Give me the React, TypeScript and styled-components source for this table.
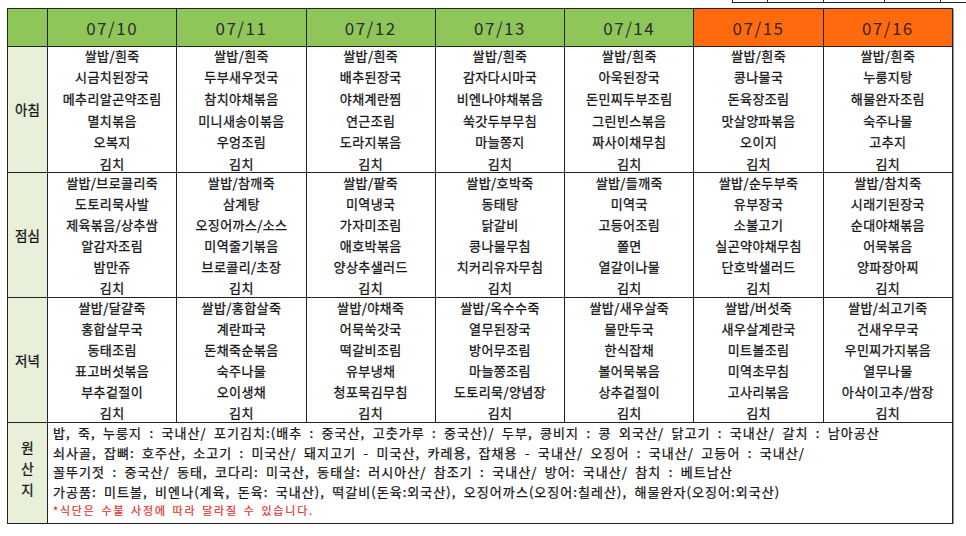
import styled, { createGlobalStyle } from "styled-components";

const colors = {
  line: "#222222",
  green: "#8fc65a",
  orange: "#ff6a0e",
  label: "#e9f0da",
  text: "#161616",
  red: "#e2322c",
};

const GlobalStyle = createGlobalStyle`
  body {
    margin: 0;
    background: #ffffff;
    font-family: "Noto Sans CJK KR", "Noto Sans", sans-serif;
    color: ${colors.text};
  }
`;

type Day = {
  date: string;
  weekend?: boolean;
  breakfast: string[];
  lunch: string[];
  dinner: string[];
};

const days: Day[] = [
  {
    date: "07/10",
    breakfast: ["쌀밥/흰죽", "시금치된장국", "메추리알곤약조림", "멸치볶음", "오복지", "김치"],
    lunch: ["쌀밥/브로콜리죽", "도토리묵사발", "제육볶음/상추쌈", "알감자조림", "밤만쥬", "김치"],
    dinner: ["쌀밥/달걀죽", "홍합살무국", "동태조림", "표고버섯볶음", "부추겉절이", "김치"],
  },
  {
    date: "07/11",
    breakfast: ["쌀밥/흰죽", "두부새우젓국", "참치야채볶음", "미니새송이볶음", "우엉조림", "김치"],
    lunch: ["쌀밥/참깨죽", "삼계탕", "오징어까스/소스", "미역줄기볶음", "브로콜리/초장", "김치"],
    dinner: ["쌀밥/홍합살죽", "계란파국", "돈채죽순볶음", "숙주나물", "오이생채", "김치"],
  },
  {
    date: "07/12",
    breakfast: ["쌀밥/흰죽", "배추된장국", "야채계란찜", "연근조림", "도라지볶음", "김치"],
    lunch: ["쌀밥/팥죽", "미역냉국", "가자미조림", "애호박볶음", "양상추샐러드", "김치"],
    dinner: ["쌀밥/야채죽", "어묵쑥갓국", "떡갈비조림", "유부냉채", "청포묵김무침", "김치"],
  },
  {
    date: "07/13",
    breakfast: ["쌀밥/흰죽", "감자다시마국", "비엔나야채볶음", "쑥갓두부무침", "마늘쫑지", "김치"],
    lunch: ["쌀밥/호박죽", "동태탕", "닭갈비", "콩나물무침", "치커리유자무침", "김치"],
    dinner: ["쌀밥/옥수수죽", "열무된장국", "방어무조림", "마늘쫑조림", "도토리묵/양념장", "김치"],
  },
  {
    date: "07/14",
    breakfast: ["쌀밥/흰죽", "아욱된장국", "돈민찌두부조림", "그린빈스볶음", "짜사이채무침", "김치"],
    lunch: ["쌀밥/들깨죽", "미역국", "고등어조림", "쫄면", "열갈이나물", "김치"],
    dinner: ["쌀밥/새우살죽", "물만두국", "한식잡채", "볼어묵볶음", "상추겉절이", "김치"],
  },
  {
    date: "07/15",
    weekend: true,
    breakfast: ["쌀밥/흰죽", "콩나물국", "돈육장조림", "맛살양파볶음", "오이지", "김치"],
    lunch: ["쌀밥/순두부죽", "유부장국", "소불고기", "실곤약야채무침", "단호박샐러드", "김치"],
    dinner: ["쌀밥/버섯죽", "새우살계란국", "미트볼조림", "미역초무침", "고사리볶음", "김치"],
  },
  {
    date: "07/16",
    weekend: true,
    breakfast: ["쌀밥/흰죽", "누룽지탕", "해물완자조림", "숙주나물", "고추지", "김치"],
    lunch: ["쌀밥/참치죽", "시래기된장국", "순대야채볶음", "어묵볶음", "양파장아찌", "김치"],
    dinner: ["쌀밥/쇠고기죽", "건새우무국", "우민찌가지볶음", "열무나물", "아삭이고추/쌈장", "김치"],
  },
];

const meals: { key: "breakfast" | "lunch" | "dinner"; label: string; lh: number }[] = [
  { key: "breakfast", label: "아침", lh: 21.6 },
  { key: "lunch", label: "점심", lh: 21 },
  { key: "dinner", label: "저녁", lh: 21 },
];

const origin = [
  "밥, 죽, 누룽지 : 국내산/ 포기김치:(배추 : 중국산, 고춧가루 : 중국산)/ 두부, 콩비지 : 콩 외국산/ 닭고기 : 국내산/ 갈치 : 남아공산",
  "쇠사골, 잡뼈: 호주산, 소고기 : 미국산/ 돼지고기 - 미국산, 카레용, 잡채용 - 국내산/ 오징어 : 국내산/ 고등어 : 국내산/",
  "꼴뚜기젓 : 중국산/ 동태, 코다리: 미국산, 동태살: 러시아산/ 참조기 : 국내산/ 방어: 국내산/ 참치 : 베트남산",
  "가공품: 미트볼, 비엔나(계육, 돈육: 국내산), 떡갈비(돈육:외국산), 오징어까스(오징어:칠레산), 해물완자(오징어:외국산)",
];

// 위쪽에 잘려 보이는 다른 표의 아랫부분
const TopStrip = styled.div`
  display: flex;
  margin-left: 732px;
  height: 3px;
  box-sizing: border-box;
  border-bottom: 1px solid ${colors.line};
`;

const StripCell = styled.div<{ $w: number }>`
  width: ${(p) => p.$w}px;
  box-sizing: border-box;
  border-left: 1px solid ${colors.line};
  &:last-child {
    border-right: 1px solid ${colors.line};
  }
`;

const Table = styled.div`
  display: grid;
  grid-template-columns: 39px repeat(7, 1fr);
  grid-template-rows: 37px 125px 124px 124px 100px;
  gap: 1px;
  width: 946px;
  margin: 5px 0 0 7px;
  padding: 1px;
  box-sizing: border-box;
  background: ${colors.line};
  box-shadow: 1px 1px 0 #9a9a9a;
`;

const DateCell = styled.div<{ $weekend?: boolean }>`
  display: flex;
  align-items: center;
  justify-content: center;
  background: ${(p) => (p.$weekend ? colors.orange : colors.green)};
  color: ${(p) => (p.$weekend ? "#3a2414" : "#2c2c2c")};
  font-size: 17px;
  letter-spacing: 1.5px;
`;

const LabelCell = styled.div<{ $pb?: number }>`
  display: flex;
  flex-direction: column;
  align-items: center;
  justify-content: center;
  padding-bottom: ${(p) => p.$pb ?? 0}px;
  background: ${colors.label};
  font-size: 13.5px;
  line-height: 21px;
  -webkit-text-stroke: 0.3px currentColor;
`;

const MenuCell = styled.div<{ $lh: number }>`
  display: flex;
  flex-direction: column;
  align-items: center;
  justify-content: center;
  overflow: hidden;
  background: #ffffff;
  font-size: 13px;
  letter-spacing: 0.4px;
  line-height: ${(p) => p.$lh}px;
  white-space: nowrap;
  -webkit-text-stroke: 0.3px currentColor;
`;

const OriginCell = styled.div`
  grid-column: 2 / span 7;
  display: flex;
  flex-direction: column;
  overflow: hidden;
  padding-left: 5px;
  background: #ffffff;
  font-size: 13px;
  letter-spacing: 1.05px;
  word-spacing: 3.4px;
  line-height: 19.5px;
  white-space: nowrap;
  -webkit-text-stroke: 0.25px currentColor;
`;

const Notice = styled.div`
  color: ${colors.red};
  font-size: 11px;
  letter-spacing: 1.8px;
  word-spacing: 1.5px;
  -webkit-text-stroke: 0.2px currentColor;
`;

export default function App() {
  return (
    <>
      <GlobalStyle />
      <TopStrip>
        <StripCell $w={35} />
        <StripCell $w={56} />
        <StripCell $w={61} />
        <StripCell $w={57} />
      </TopStrip>
      <Table>
        <DateCell />
        {days.map((d) => (
          <DateCell key={d.date} $weekend={d.weekend}>
            {d.date}
          </DateCell>
        ))}

        {meals.map((m) => [
          <LabelCell key={m.key}>{m.label}</LabelCell>,
          ...days.map((d) => (
            <MenuCell key={m.key + d.date} $lh={m.lh}>
              {d[m.key].map((item, i) => (
                <div key={i}>{item}</div>
              ))}
            </MenuCell>
          )),
        ])}

        <LabelCell $pb={10}>
          <div>원</div>
          <div>산</div>
          <div>지</div>
        </LabelCell>
        <OriginCell>
          {origin.map((line, i) => (
            <div key={i}>{line}</div>
          ))}
          <Notice>*식단은 수불 사정에 따라 달라질 수 있습니다.</Notice>
        </OriginCell>
      </Table>
    </>
  );
}
